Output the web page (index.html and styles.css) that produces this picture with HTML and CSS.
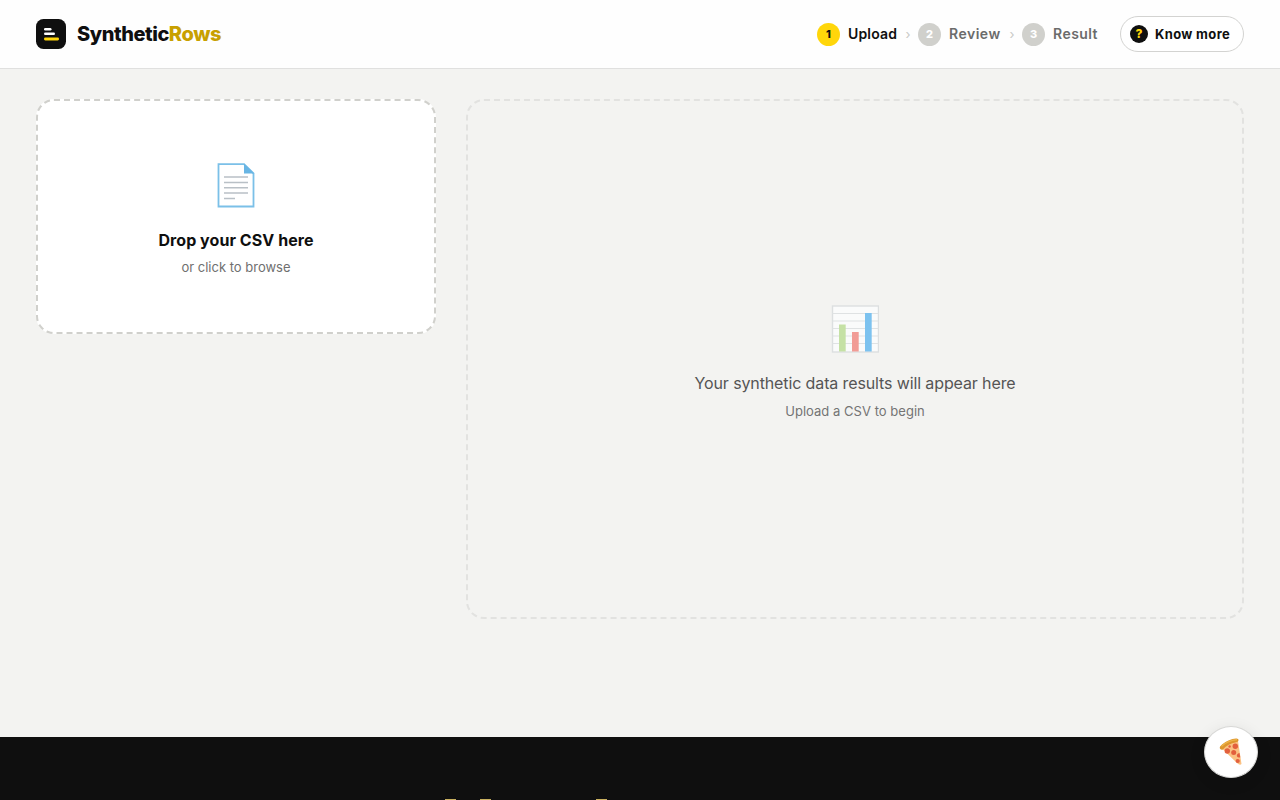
FILE: index.html
```html
<!DOCTYPE html>
<html lang="en">

<head>
    <meta charset="utf-8">
    <title>SyntheticRows</title>
    <meta name="viewport" content="width=device-width, initial-scale=1">
    <link rel="stylesheet" href="styles.css">
</head>

<body>
    <header class="header">
        <div class="brand">
            <svg class="brand-logo" viewBox="0 0 30 30">
                <rect width="30" height="30" rx="7.5" fill="#0f0f0f" />
                <rect x="8" y="9" width="7.5" height="2.6" rx="1.3" fill="#fff" />
                <rect x="8" y="13.5" width="11" height="2.6" rx="1.3" fill="#fff" />
                <rect x="8" y="18.6" width="15" height="2.8" rx="1.3" fill="#ffd60a" />
            </svg>
            <span class="brand-name">Synthetic<span class="brand-accent">Rows</span></span>
        </div>
        <div class="header-right">
            <div class="steps">
                <div class="step active"><span class="step-num">1</span><span class="step-label upload">Upload</span></div>
                <span class="step-arrow">›</span>
                <div class="step"><span class="step-num">2</span><span class="step-label review">Review</span></div>
                <span class="step-arrow">›</span>
                <div class="step"><span class="step-num">3</span><span class="step-label result">Result</span></div>
            </div>
            <button class="know-more"><span class="know-icon">?</span><span>Know more</span></button>
        </div>
    </header>

    <main class="main">
        <section class="dropzone">
            <svg class="drop-icon" viewBox="0 0 38 46">
                <path d="M1.5 2.2H27L36.5 11.500V44.500H1.500Z" fill="#fff" stroke="#7bc0e8" stroke-width="1.8" />
                <path d="M27 1.500V11.500H37.300Z" fill="#68b5e4" />
                <path d="M7 15H31M7 20.500H31M7 25.800H31M7 31H31M7 36.500H18" stroke="#b9c0c6" stroke-width="1.4" fill="none" />
            </svg>
            <h2 class="drop-title">Drop your CSV here</h2>
            <p class="drop-hint">or click to browse</p>
        </section>

        <section class="results">
            <svg class="results-icon" viewBox="0 0 48 48">
                <rect x="1.500" y="1" width="46" height="46" fill="#fafbfb" stroke="#dcdfe0" stroke-width="1.4" />
                <path d="M1.500 8.500H47.500M1.500 16H47.500M1.500 23.500H47.500M1.500 31H47.500M1.500 38.500H47.500" stroke="#dfe2e3" stroke-width="1" />
                <rect x="8" y="19.500" width="6.700" height="27" fill="#c5e1a5" />
                <rect x="21" y="27" width="6.700" height="19.500" fill="#f19c96" />
                <rect x="34" y="8" width="6.700" height="38.500" fill="#7cc2ef" />
            </svg>
            <p class="results-title">Your synthetic data results will appear here</p>
            <p class="results-hint">Upload a CSV to begin</p>
        </section>
    </main>

    <footer class="footer">
        <!-- gold tips that rise above the fold -->
        <svg class="footer-tips" viewBox="0 0 180 1">
            <path d="M5 0H16V1H5ZM40 0H51V1H40ZM156 0H167V1H156Z" fill="#c9b060" />
        </svg>
    </footer>

    <button class="pizza">
        <svg class="pizza-icon" viewBox="0 0 26 28">
            <path d="M3 10.500Q10 4 19 3L22.500 26Q21 28 18 25Z" fill="#fbc182" />
            <path d="M.7 10Q.3 8.500 3 6.500Q10 .8 17 .5Q19.500 .3 19.600 2Q19.600 4 17 4.300Q9 5.500 4 11.500Q1.500 12.600 .7 10Z" fill="#dc952d" />
            <path d="M2.500 8.200Q9 2.500 18 1.700" fill="none" stroke="#edb347" stroke-width="1.300" />
            <circle cx="8.300" cy="13" r="2.700" fill="#e2603d" />
            <circle cx="16.300" cy="8.300" r="2.700" fill="#e2603d" />
            <circle cx="14.700" cy="14.500" r="2.500" fill="#e2603d" />
            <path d="M20.500 15Q17 16 18 18.500Q19 20 21.300 19.300Z" fill="#e2603d" />
            <circle cx="18.700" cy="23" r="2.100" fill="#e2603d" />
            <circle cx="10.600" cy="8.500" r="1.200" fill="#e2603d" />
        </svg>
    </button>
</body>

</html>
```
FILE: styles.css
```css
* {
    margin: 0;
    padding: 0;
    box-sizing: border-box;
}

body {
    display: flex;
    flex-direction: column;
    height: 100vh;
    overflow: hidden;
    background: #f3f3f1;
    color: #0f0f0f;
    font-family: Inter, "Liberation Sans", sans-serif;
}

svg {
    display: block;
}

button {
    font-family: inherit;
    color: inherit;
    cursor: pointer;
}

.header {
    flex: none;
    display: flex;
    align-items: center;
    justify-content: space-between;
    height: 69px;
    padding: 0 36px;
    background: #fefefe;
    border-bottom: 1px solid #e0e0df;
}

.brand {
    display: flex;
    align-items: center;
    gap: 11px;
}

.brand-logo {
    width: 30px;
    height: 30px;
}

.brand-name {
    padding-bottom: 1px;
    font-size: 20px;
    font-weight: 800;
    line-height: 30px;
    letter-spacing: -.45px;
}

.brand-accent {
    color: #c8a000;
}

.header-right {
    display: flex;
    align-items: center;
    gap: 22px;
}

.steps,
.step {
    display: flex;
    align-items: center;
}

.steps {
    gap: 8.5px;
}

.step {
    gap: 8px;
    color: #6b6b6b;
    font-size: 14px;
    font-weight: 600;
}

.step-num {
    display: flex;
    align-items: center;
    justify-content: center;
    width: 23px;
    height: 23px;
    border-radius: 50%;
    background: #d0d0cc;
    color: #fff;
    font-size: 11px;
    font-weight: 800;
}

.step-label {
    padding-bottom: 2px;
    white-space: nowrap;
}

.upload {
    width: 49px;
    letter-spacing: .15px;
}

.review {
    width: 52px;
    letter-spacing: .5px;
}

.result {
    width: 45px;
    letter-spacing: .45px;
}

.step-arrow {
    width: 4px;
    color: #c9c9c5;
    font-size: 13px;
    line-height: 16px;
}

.active {
    color: #0f0f0f;
}

.active .step-num {
    background: #ffd60a;
    color: #0f0f0f;
}

.know-more {
    display: flex;
    align-items: center;
    gap: 7px;
    width: 124px;
    height: 36px;
    padding: 0 9px;
    border: 1px solid #d3d3d1;
    border-radius: 18px;
    background: #fff;
    font-size: 13px;
    font-weight: 700;
    letter-spacing: .35px;
    white-space: nowrap;
}

.know-icon {
    flex: none;
    width: 18px;
    height: 18px;
    border-radius: 50%;
    background: #0f0f0f;
    color: #ffd60a;
    font-size: 12px;
    font-weight: 800;
    letter-spacing: 0;
    line-height: 18px;
    text-align: center;
}

.main {
    flex: none;
    display: flex;
    align-items: flex-start;
    gap: 30px;
    height: 668px;
    padding: 30px 36px;
}

.dropzone,
.results {
    display: flex;
    flex-direction: column;
    align-items: center;
    border-radius: 18px;
    text-align: center;
}

.dropzone {
    width: 400px;
    height: 235px;
    padding-top: 61px;
    border: 2px dashed #d0d0cc;
    background: #fff;
}

.drop-icon {
    width: 38px;
    height: 46px;
}

.drop-title {
    margin-top: 21px;
    font-size: 16px;
    font-weight: 700;
    line-height: 22px;
    letter-spacing: .06px;
}

.drop-hint {
    margin-top: 6px;
    color: #6f6f6f;
    font-size: 13px;
    line-height: 20px;
}

.results {
    flex: 1;
    height: 520px;
    padding-top: 204px;
    border: 2px dashed #e2e2e0;
}

.results-icon {
    width: 48px;
    height: 48px;
}

.results-title {
    margin-top: 19px;
    color: #555;
    font-size: 16px;
    line-height: 22px;
    letter-spacing: -.12px;
}

.results-hint {
    margin-top: 7px;
    color: #747474;
    font-size: 13px;
    line-height: 20px;
    letter-spacing: .03px;
}

.footer {
    flex: 1;
    display: flex;
    align-items: flex-end;
    background: #0f0f0f;
}

.footer-tips {
    width: 180px;
    height: 1px;
    margin-left: 440px;
}

.pizza {
    position: fixed;
    right: 22px;
    bottom: 22px;
    display: flex;
    align-items: center;
    justify-content: center;
    width: 54px;
    height: 52px;
    border: 1px solid #d8d8d6;
    border-radius: 50%;
    background: #fff;
    box-shadow: 0 4px 16px rgba(0, 0, 0, .1);
}

.pizza-icon {
    width: 26px;
    height: 28px;
    margin-left: 2px;
}
```
